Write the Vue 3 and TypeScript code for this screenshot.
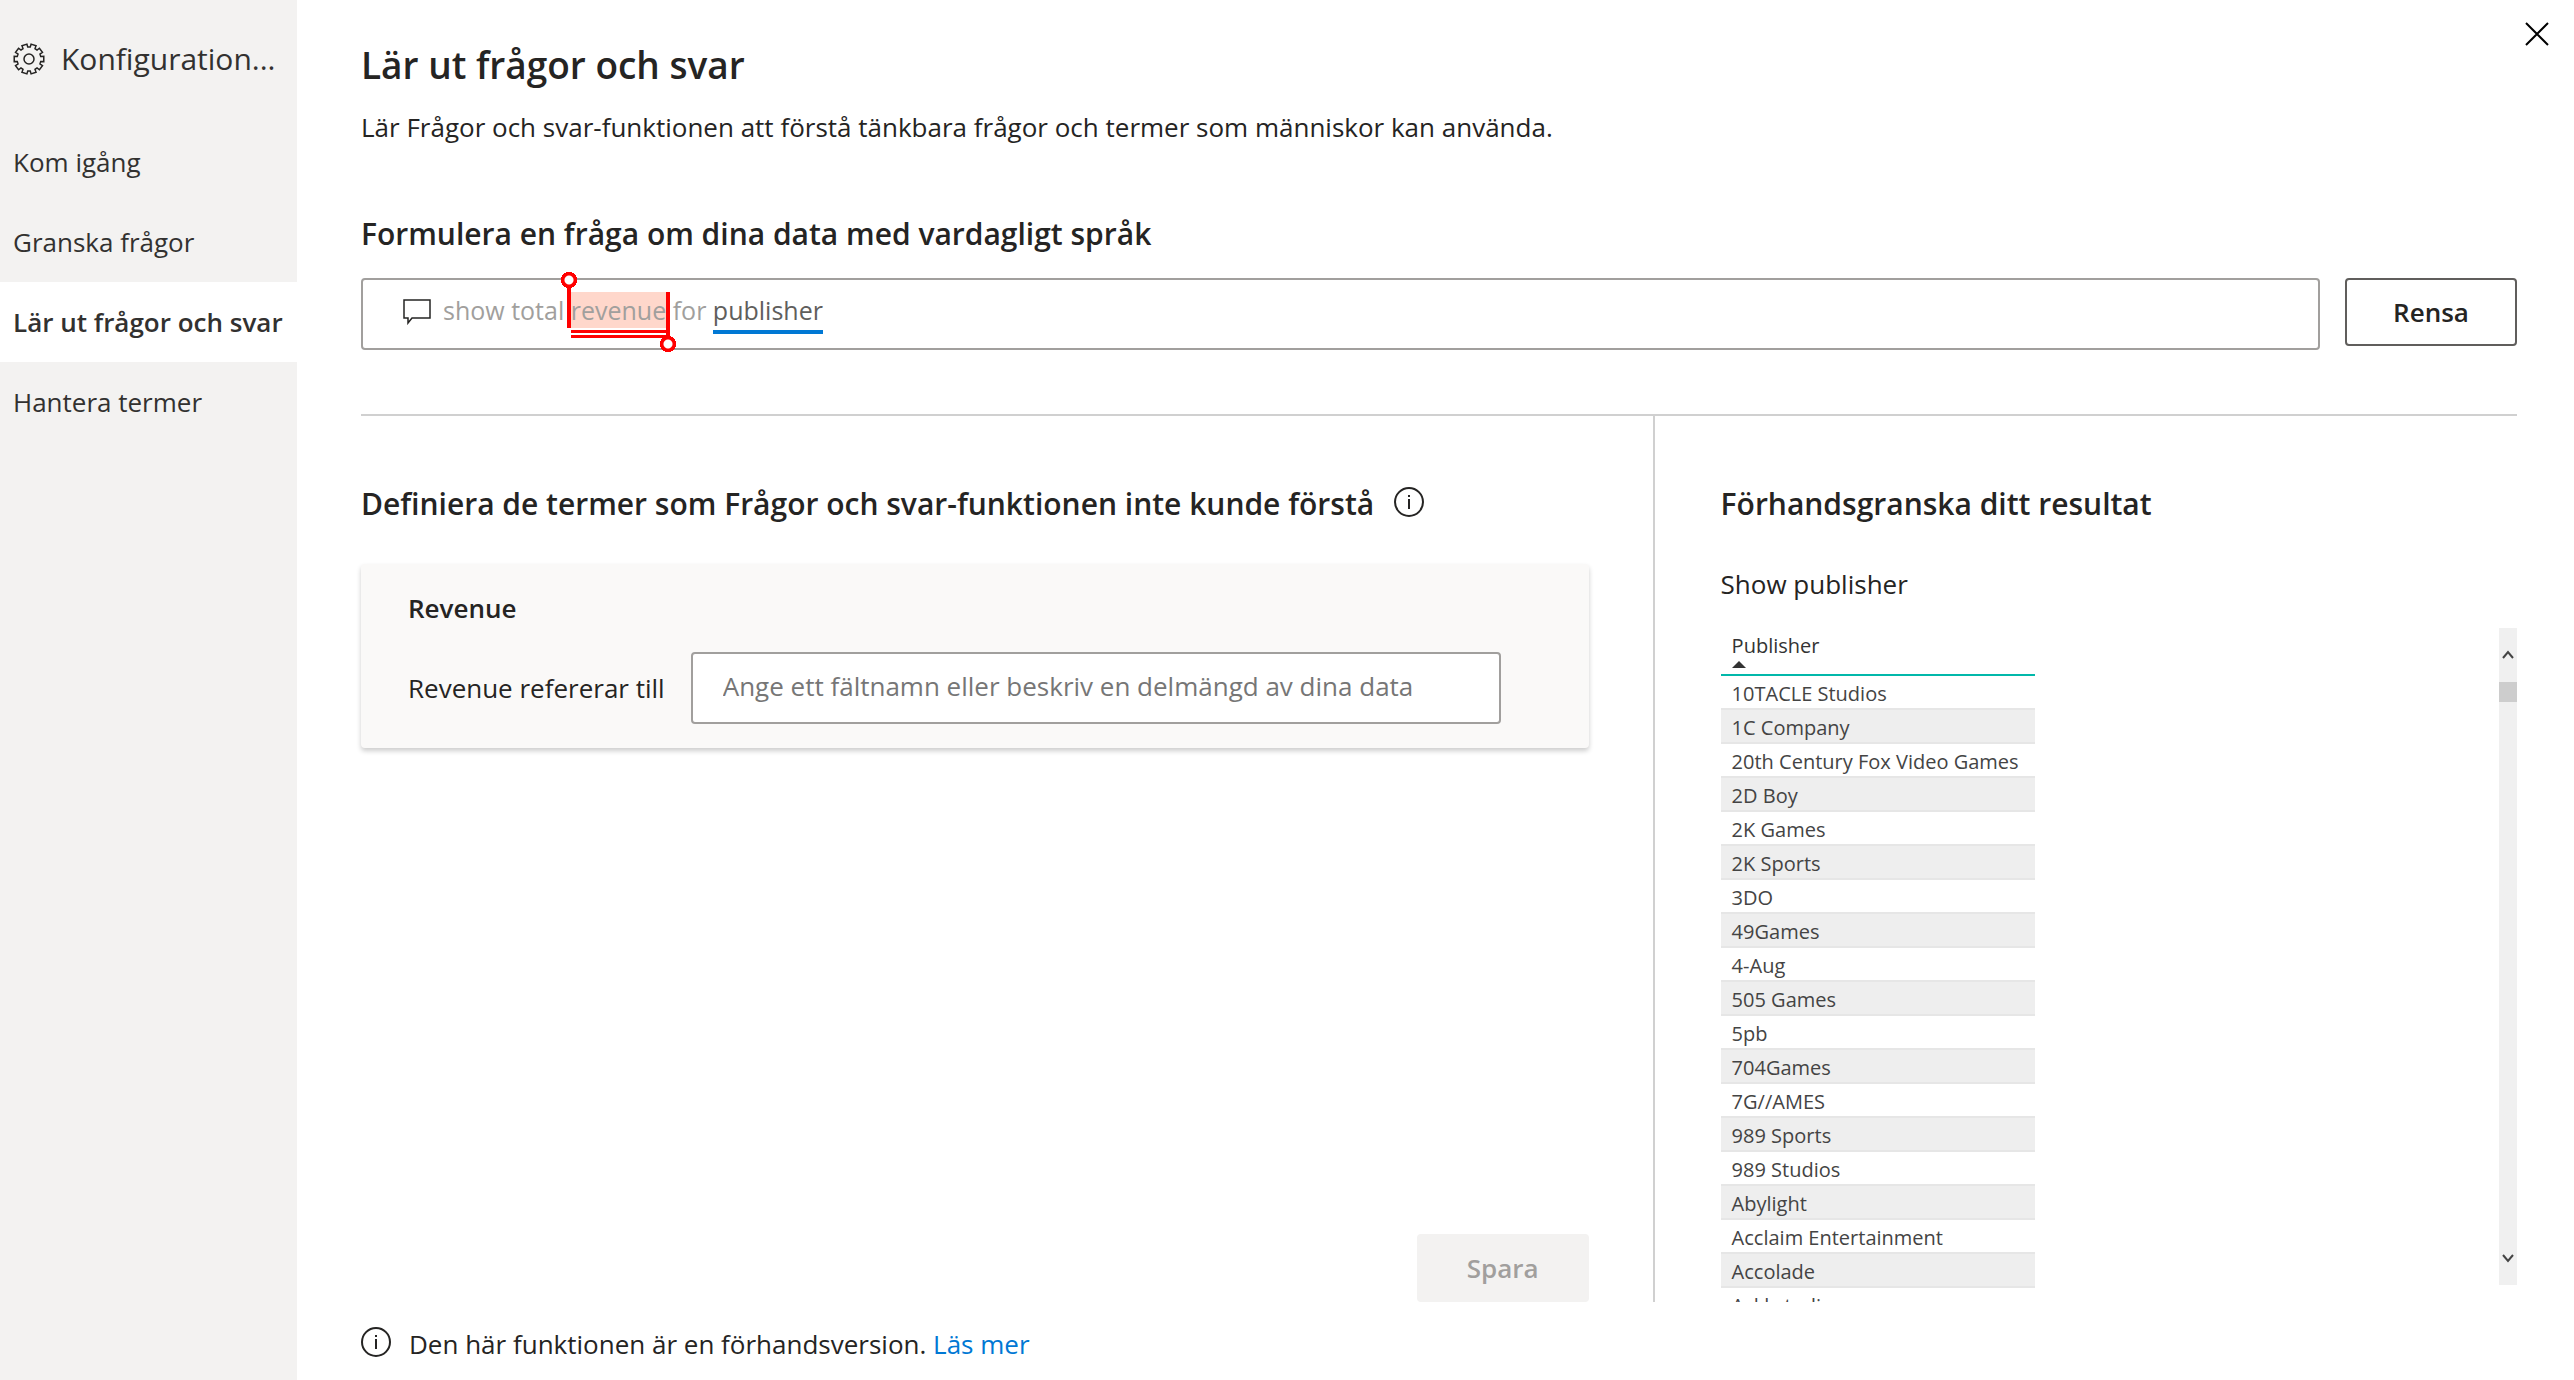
<script setup lang="ts">
import { ref } from 'vue'

interface NavItem {
  id: string
  label: string
}

interface Token {
  text: string
  kind: 'plain' | 'unknown' | 'field'
}

const navItems: NavItem[] = [
  { id: 'start', label: 'Kom igång' },
  { id: 'review', label: 'Granska frågor' },
  { id: 'teach', label: 'Lär ut frågor och svar' },
  { id: 'terms', label: 'Hantera termer' },
]
const active = ref('teach')

const tokens: Token[] = [
  { text: 'show total ', kind: 'plain' },
  { text: 'revenue', kind: 'unknown' },
  { text: ' for ', kind: 'plain' },
  { text: 'publisher', kind: 'field' },
]
const question = ref(tokens.map((t) => t.text).join(''))
const definition = ref('')

/** Outline of a cog wheel centred in a 32 by 32 box. */
function cogPath(teeth: number, outer: number, inner: number): string {
  const step = 360 / teeth
  const at = (deg: number, r: number): string => {
    const a = (deg * Math.PI) / 180
    return `${(16 + r * Math.cos(a)).toFixed(2)} ${(16 + r * Math.sin(a)).toFixed(2)}`
  }
  const points: string[] = []
  for (let i = 0; i < teeth; i++) {
    const mid = i * step
    points.push(at(mid - 12, inner), at(mid - 10, outer), at(mid + 10, outer), at(mid + 12, inner))
  }
  return `M${points.join(' L')} Z`
}
const cog = cogPath(10, 15, 12)

const publishers: string[] = [
  '10TACLE Studios',
  '1C Company',
  '20th Century Fox Video Games',
  '2D Boy',
  '2K Games',
  '2K Sports',
  '3DO',
  '49Games',
  '4-Aug',
  '505 Games',
  '5pb',
  '704Games',
  '7G//AMES',
  '989 Sports',
  '989 Studios',
  'Abylight',
  'Acclaim Entertainment',
  'Accolade',
  'Ackkstudios',
]
</script>

<template>
  <div class="dialog">
    <aside class="sidebar">
      <div class="sidebar-head">
        <svg class="gear" viewBox="0 0 32 32" stroke-width="1.5" aria-hidden="true">
          <path :d="cog" />
          <circle cx="16" cy="16" r="5" />
        </svg>
        <span class="sidebar-title">Konfiguration...</span>
      </div>
      <nav class="nav">
        <button
          v-for="item in navItems"
          :key="item.id"
          type="button"
          class="nav-item"
          :class="{ active: item.id === active }"
          @click="active = item.id"
        >
          {{ item.label }}
        </button>
      </nav>
    </aside>

    <main class="main">
      <button type="button" class="close" aria-label="Stäng">
        <svg viewBox="0 0 24 24" stroke-width="2" aria-hidden="true"><path d="M1 1 L23 23 M23 1 L1 23" /></svg>
      </button>

      <h1 class="title">Lär ut frågor och svar</h1>
      <p class="lead">Lär Frågor och svar-funktionen att förstå tänkbara frågor och termer som människor kan använda.</p>

      <label class="heading ask-label" for="question">Formulera en fråga om dina data med vardagligt språk</label>
      <div class="ask">
        <div class="ask-box">
          <svg class="bubble" viewBox="0 0 28 26" stroke-width="1.5" aria-hidden="true">
            <path d="M1 1 H27 V19 H9 L5 24 V19 H1 Z" />
          </svg>
          <div class="query">
            <div class="tokens" aria-hidden="true"><span v-for="(t, i) in tokens" :key="i" :class="t.kind">{{ t.text }}</span></div>
            <input id="question" v-model="question" class="query-input" type="text" />
          </div>
        </div>
        <button type="button" class="btn btn-clear">Rensa</button>
      </div>

      <div class="panes">
        <section class="pane define">
          <div class="define-head">
            <h2 class="heading">Definiera de termer som Frågor och svar-funktionen inte kunde förstå</h2>
            <svg class="info" viewBox="0 0 30 30" stroke-width="2" aria-hidden="true">
              <circle cx="15" cy="15" r="14" />
              <path d="M15 12 V22 M15 8 V10" />
            </svg>
          </div>
          <div class="card">
            <h3 class="term">Revenue</h3>
            <div class="field-row">
              <label for="definition">Revenue refererar till</label>
              <input
                id="definition"
                v-model="definition"
                class="field-input"
                type="text"
                placeholder="Ange ett fältnamn eller beskriv en delmängd av dina data"
              />
            </div>
          </div>
          <button type="button" class="btn btn-save" disabled>Spara</button>
        </section>

        <section class="pane preview">
          <h2 class="heading">Förhandsgranska ditt resultat</h2>
          <p class="restated">Show publisher</p>
          <div class="result">
            <table class="table">
              <thead>
                <tr>
                  <th scope="col">
                    Publisher
                    <svg class="sort" viewBox="0 0 14 7" aria-hidden="true"><path d="M0 7 L7 0 L14 7 Z" /></svg>
                  </th>
                </tr>
              </thead>
              <tbody>
                <tr v-for="name in publishers" :key="name">
                  <td>{{ name }}</td>
                </tr>
              </tbody>
            </table>
            <div class="scrollbar" aria-hidden="true">
              <svg class="arrow" viewBox="0 0 12 10" stroke-width="2"><path d="M1 8 L6 2 L11 8" /></svg>
              <div class="track"><div class="thumb"></div></div>
              <svg class="arrow" viewBox="0 0 12 10" stroke-width="2"><path d="M1 2 L6 8 L11 2" /></svg>
            </div>
          </div>
        </section>
      </div>

      <footer class="footer">
        <svg class="info" viewBox="0 0 30 30" stroke-width="2" aria-hidden="true">
          <circle cx="15" cy="15" r="14" />
          <path d="M15 12 V22 M15 8 V10" />
        </svg>
        <span>Den här funktionen är en förhandsversion. <a href="#">Läs mer</a></span>
      </footer>
    </main>
  </div>
</template>

<style>
body {
  margin: 0;
  background: #fff;
}
</style>

<style scoped>
.dialog {
  display: flex;
  height: 100vh;
  overflow: hidden;
  font-family: 'Open Sans', 'Noto Sans', sans-serif;
  font-size: 26px;
  line-height: 36px;
  color: #252423;
}
.dialog * {
  box-sizing: border-box;
}
h1,
h2,
h3,
p {
  margin: 0;
}
button,
input {
  font: inherit;
  color: inherit;
}
svg {
  display: block;
  flex: none;
  fill: none;
  stroke: #252423;
}

.sidebar {
  flex: none;
  width: 297px;
  background: #f3f2f1;
  color: #323130;
}
.sidebar-head {
  display: flex;
  align-items: center;
  gap: 16px;
  height: 122px;
  padding: 0 0 4px 13px;
}
.gear {
  width: 32px;
  height: 32px;
}
.sidebar-title {
  font-size: 30px;
}
.nav {
  display: flex;
  flex-direction: column;
}
.nav-item {
  height: 80px;
  padding: 0 0 0 13px;
  border: 0;
  background: none;
  text-align: left;
  white-space: nowrap;
}
.nav-item.active {
  background: #fff;
  font-weight: 600;
}

.main {
  position: relative;
  flex: 1;
  min-width: 0;
  display: flex;
  flex-direction: column;
  padding: 41px 57px 16px 64px;
}
.close {
  position: absolute;
  top: 14px;
  right: 17px;
  padding: 8px;
  border: 0;
  background: none;
}
.close svg {
  width: 24px;
  height: 24px;
  stroke: #000;
}
.title {
  font-size: 37px;
  line-height: 48px;
  font-weight: 600;
}
.lead {
  margin-top: 20px;
}
.heading {
  font-size: 30px;
  line-height: 40px;
  font-weight: 600;
}
.ask-label {
  margin-top: 69px;
}
.ask {
  display: flex;
  align-items: flex-start;
  gap: 25px;
  margin-top: 24px;
}
.ask-box {
  flex: 1;
  min-width: 0;
  display: flex;
  align-items: center;
  gap: 12px;
  height: 72px;
  padding: 0 40px 8px;
  border: 2px solid #a19f9d;
  border-radius: 4px;
}
.bubble {
  width: 28px;
  height: 26px;
  margin-top: 4px;
}
.query {
  position: relative;
  flex: 1;
  height: 36px;
  font-size: 25px;
}
.tokens {
  white-space: pre;
  color: #a19f9d;
}
.query-input {
  position: absolute;
  inset: 0;
  width: 100%;
  padding: 0;
  border: 0;
  outline: 0;
  background: none;
  color: transparent;
  caret-color: #252423;
}
.unknown {
  position: relative;
  display: inline-block;
  height: 36px;
  background: #ffd7cb;
  box-shadow: 0 2px #fff, 0 5px #f00, 0 7px #fff, 0 10px #f00;
}
/* selection handles at both ends of the unrecognised term */
.unknown::before,
.unknown::after {
  content: '';
  position: absolute;
  width: 20px;
}
.unknown::before {
  left: -12px;
  top: -20px;
  height: 56px;
  background:
    radial-gradient(circle at 10px 8px, #fff 0 4px, #f00 5px 8px, transparent 8px) 0 0 / 20px 16px no-repeat,
    linear-gradient(#f00, #f00) 8px 100% / 4px 40px no-repeat;
}
.unknown::after {
  right: -12px;
  top: 0;
  height: 60px;
  background:
    radial-gradient(circle at 10px 8px, #fff 0 4px, #f00 5px 8px, transparent 8px) 0 100% / 20px 16px no-repeat,
    linear-gradient(#f00, #f00) 8px 0 / 4px 44px no-repeat;
}
.field {
  display: inline-block;
  height: 42px;
  border-bottom: 4px solid #0078d4;
  color: #605e5c;
}
.btn {
  height: 68px;
  width: 172px;
  border: 2px solid #605e5c;
  border-radius: 4px;
  background: #fff;
  font-weight: 600;
}

.panes {
  flex: 1;
  min-height: 0;
  display: grid;
  grid-template-columns: minmax(0, 1fr) calc(40% + 2px);
  margin-top: 64px;
  border-top: 2px solid #d0d0d0;
}
.pane {
  min-height: 0;
  display: flex;
  flex-direction: column;
  padding-top: 68px;
}
.define {
  padding-right: 64px;
}
.define-head {
  display: flex;
  align-items: center;
  gap: 20px;
}
.info {
  width: 30px;
  height: 30px;
  margin-bottom: 4px;
}
.card {
  margin-top: 40px;
  padding: 26px 88px 24px 47px;
  background: #faf9f8;
  border-radius: 4px;
  box-shadow: 0 3px 5px rgba(0, 0, 0, 0.2);
}
.term {
  font-size: 26px;
  font-weight: 600;
}
.field-row {
  display: flex;
  align-items: center;
  gap: 26px;
  margin-top: 26px;
}
.field-input {
  flex: 1;
  min-width: 0;
  height: 72px;
  padding: 0 30px 4px;
  border: 2px solid #a19f9d;
  border-radius: 4px;
  background: #fff;
  outline: 0;
}
.field-input::placeholder {
  color: #767676;
  opacity: 1;
}
.btn-save {
  align-self: flex-end;
  margin-top: auto;
  border: 0;
  background: #f3f2f1;
  color: #a19f9d;
}

.preview {
  padding-left: 66px;
  border-left: 2px solid #d0d0d0;
}
.restated {
  margin-top: 42px;
}
.result {
  flex: 1;
  min-height: 0;
  display: flex;
  justify-content: space-between;
  align-items: flex-start;
  overflow: hidden;
  margin-top: 24px;
}
.table {
  border-collapse: separate;
  border-spacing: 0;
  font-size: 20px;
  color: #444;
}
.table th {
  height: 50px;
  padding: 0 11px 6px;
  border-bottom: 2px solid #01b8aa;
  font-weight: 400;
  line-height: 28px;
  text-align: left;
  vertical-align: bottom;
  color: #333;
}
.sort {
  width: 14px;
  height: 7px;
  margin-top: 1px;
  fill: #333;
  stroke: none;
}
.table td {
  height: 34px;
  padding: 4px 16px 0 11px;
  border-bottom: 2px solid #e6e6e6;
  line-height: 28px;
}
.table tbody tr:nth-child(even) {
  background: #eee;
}
.scrollbar {
  display: flex;
  flex-direction: column;
  align-items: center;
  width: 18px;
  height: calc(100% - 19px);
  margin-top: 2px;
  padding: 22px 0;
  gap: 22px;
  background: #f0f0f0;
}
.arrow {
  width: 12px;
  height: 10px;
  stroke: #444;
}
.track {
  flex: 1;
  width: 100%;
}
.thumb {
  height: 20px;
  background: #cdcdcd;
}

.footer {
  display: flex;
  align-items: center;
  gap: 18px;
  margin-top: 22px;
  line-height: 40px;
}
.footer a {
  color: #0078d4;
  text-decoration: none;
}
</style>
